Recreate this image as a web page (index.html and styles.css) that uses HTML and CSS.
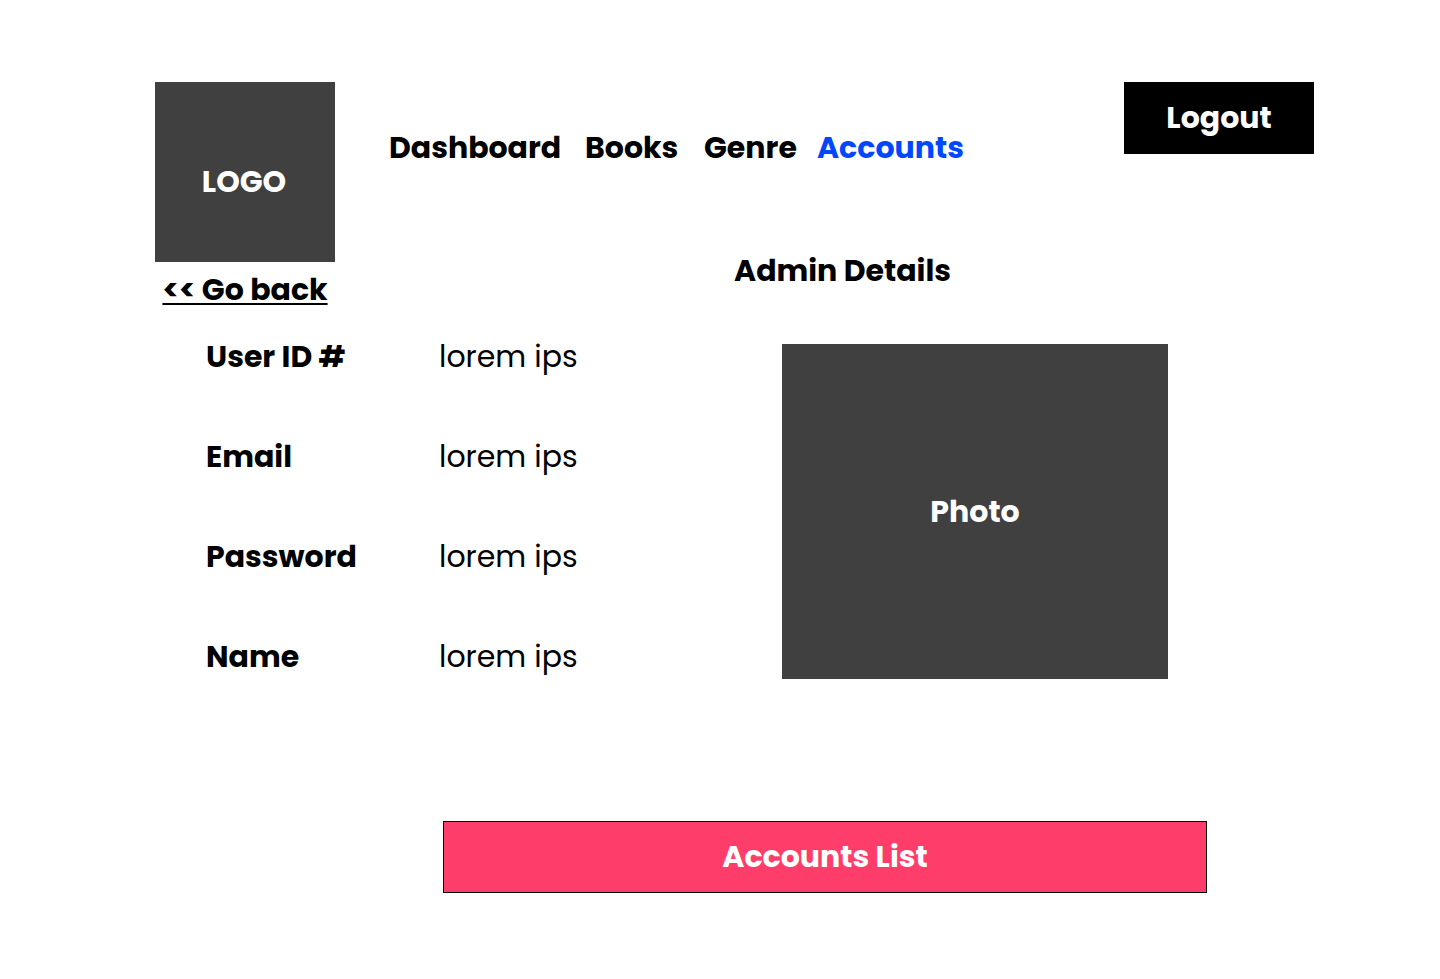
FILE: index.html
```html
<!DOCTYPE html>
<html lang="en">
<head>
<meta charset="utf-8">
<meta name="viewport" content="width=device-width, initial-scale=1">
<title>Admin Details</title>
<link rel="stylesheet" href="styles.css">
</head>
<body>
<div class="page">
  <header class="header">
    <div class="brand">
      <div class="logo">LOGO</div>
      <a class="back" href="#">&lt;&lt; Go back</a>
    </div>
    <div class="heading">
      <div class="topbar">
        <nav class="nav">
          <a href="#">Dashboard</a>
          <a href="#">Books</a>
          <a href="#">Genre</a>
          <a class="active" href="#" aria-current="page">Accounts</a>
        </nav>
        <button class="logout" type="button">Logout</button>
      </div>
      <h1 class="title">Admin Details</h1>
    </div>
  </header>
  <main>
    <section class="details">
      <dl class="fields">
        <dt>User ID #</dt><dd>lorem ips</dd>
        <dt>Email</dt><dd>lorem ips</dd>
        <dt>Password</dt><dd>lorem ips</dd>
        <dt>Name</dt><dd>lorem ips</dd>
      </dl>
      <div class="photo">Photo</div>
    </section>
    <div class="actions">
      <button class="list-button" type="button">Accounts List</button>
    </div>
  </main>
</div>
</body>
</html>
```
FILE: styles.css
```css
* {
  box-sizing: border-box;
}

body {
  margin: 0;
  background: #fff;
  color: #000;
  font: 700 30px/45px Poppins, Inter, sans-serif;
}

a {
  color: inherit;
  text-decoration: none;
}

button {
  height: 72px;
  padding: 0 0 2px;
  color: #fff;
  font: inherit;
  cursor: pointer;
}

.page {
  padding: 82px 126px 86px 155px;
}

.header {
  display: grid;
  grid-template-columns: 180px 1fr;
  column-gap: 54px;
}

.brand {
  display: flex;
  flex-direction: column;
  align-items: center;
  gap: 5px;
}

.logo,
.photo {
  display: flex;
  align-items: center;
  justify-content: center;
  background: #404040;
  color: #fff;
}

.logo {
  width: 180px;
  height: 180px;
  padding: 19px 2px 0 0;
}

.back {
  text-decoration: underline;
  text-decoration-thickness: 2px;
  text-underline-offset: 3px;
  text-decoration-skip-ink: none;
  white-space: nowrap;
}

.topbar {
  display: flex;
  justify-content: space-between;
}

.nav {
  display: grid;
  grid-template-columns: 196px 119px 113px auto;
  padding-top: 43px;
}

.active {
  color: #0047ff;
}

.logout {
  width: 190px;
  border: 0;
  background: #000;
}

.title {
  margin: 78px 18px 0 0;
  font: inherit;
  text-align: center;
}

.details {
  display: grid;
  grid-template-columns: 1fr 386px;
  margin-top: 22px;
  padding: 0 146px 0 51px;
}

.fields {
  display: grid;
  grid-template-columns: 233px 1fr;
  align-content: start;
  row-gap: 55px;
  margin: 0;
}

.fields dd {
  margin: 0;
  font-weight: 400;
}

.photo {
  margin-top: 10px;
}

.actions {
  margin-top: 142px;
  padding: 0 107px 0 288px;
}

.list-button {
  width: 100%;
  border: 1px solid #000;
  background: #ff3d6a;
}
```
